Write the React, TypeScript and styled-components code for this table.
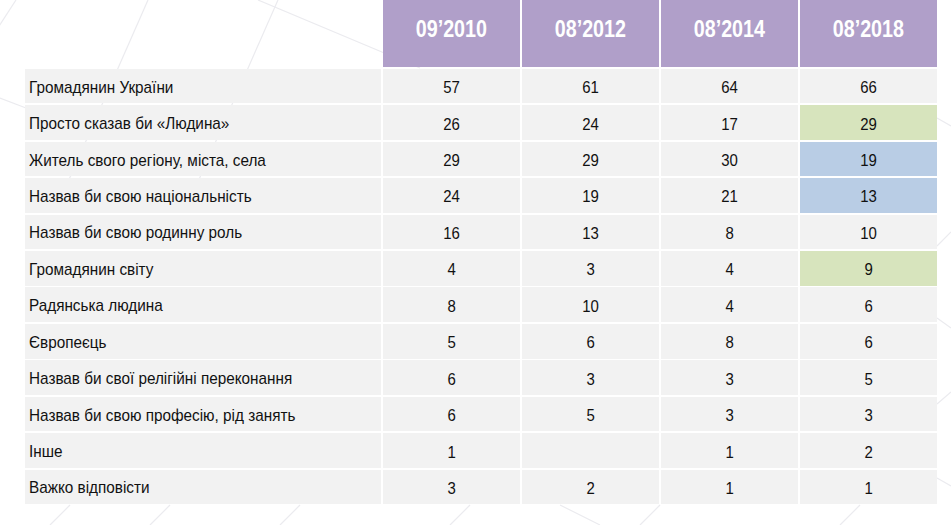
import React from "react";
import styled, { createGlobalStyle } from "styled-components";

const GlobalStyle = createGlobalStyle`
  html, body {
    margin: 0;
    padding: 0;
    background: #ffffff;
  }
  body {
    font-family: "Liberation Sans", Arial, sans-serif;
  }
`;

const Page = styled.div`
  position: relative;
  width: 951px;
  height: 525px;
  overflow: hidden;
  background: #ffffff;
`;

const Backdrop = styled.svg`
  position: absolute;
  left: 0;
  top: 0;
  width: 951px;
  height: 525px;
  z-index: 0;
`;

const Table = styled.div`
  position: relative;
  z-index: 1;
  display: grid;
  grid-template-columns: 356px repeat(4, 137px);
  grid-template-rows: 67px;
  grid-auto-rows: 34.6px;
  column-gap: 2px;
  row-gap: 1.85px;
  padding-left: 25px;
`;

const Corner = styled.div``;

const HeadCell = styled.div`
  display: flex;
  align-items: center;
  justify-content: center;
  padding-bottom: 10px;
  background: #b09fc9;
  color: #ffffff;
  font-family: "Liberation Sans", Arial, sans-serif;
  font-weight: 700;
  font-size: 24px;
`;

// the slide uses a narrow face, so squeeze the text horizontally
const Narrow = styled.span<{ $scale: number; $origin?: string }>`
  display: inline-block;
  white-space: nowrap;
  transform: scaleX(${(p) => p.$scale});
  transform-origin: ${(p) => p.$origin ?? "center"} center;
`;

const Label = styled.div`
  display: flex;
  align-items: center;
  padding-left: 4px;
  padding-top: 3px;
  background: #f2f2f2;
  color: #111111;
  font-family: "Liberation Sans", Arial, sans-serif;
  font-size: 17px;
`;

type Tone = "plain" | "green" | "blue";

const tones: Record<Tone, string> = {
  plain: "#f2f2f2",
  green: "#d7e4bd",
  blue: "#b9cde5",
};

const Value = styled.div<{ $tone: Tone }>`
  display: flex;
  align-items: center;
  justify-content: center;
  padding-top: 4px;
  background: ${(p) => tones[p.$tone]};
  color: #111111;
  font-family: "Liberation Sans", Arial, sans-serif;
  font-size: 17px;
`;

const years = ["09\u20192010", "08\u20192012", "08\u20192014", "08\u20192018"];

type Row = { label: string; values: string[]; tone?: Tone };

const rows: Row[] = [
  { label: "Громадянин України", values: ["57", "61", "64", "66"] },
  { label: "Просто сказав би «Людина»", values: ["26", "24", "17", "29"], tone: "green" },
  { label: "Житель свого регіону, міста, села", values: ["29", "29", "30", "19"], tone: "blue" },
  { label: "Назвав би свою національність", values: ["24", "19", "21", "13"], tone: "blue" },
  { label: "Назвав би свою родинну роль", values: ["16", "13", "8", "10"] },
  { label: "Громадянин світу", values: ["4", "3", "4", "9"], tone: "green" },
  { label: "Радянська людина", values: ["8", "10", "4", "6"] },
  { label: "Європеєць", values: ["5", "6", "8", "6"] },
  { label: "Назвав би свої релігійні переконання", values: ["6", "3", "3", "5"] },
  { label: "Назвав би свою професію, рід занять", values: ["6", "5", "3", "3"] },
  { label: "Інше", values: ["1", "", "1", "2"] },
  { label: "Важко відповісти", values: ["3", "2", "1", "1"] },
];

const lines: [number, number, number, number][] = [
  [16, 0, -10, 40],
  [148, 0, 60, 200],
  [278, 0, 190, 200],
  [258, 0, 420, 68],
  [0, 98, 26, 108],
  [70, 505, 50, 525],
  [170, 505, 150, 525],
  [300, 505, 280, 525],
  [470, 505, 450, 525],
  [560, 505, 600, 525],
  [660, 505, 640, 525],
  [860, 505, 840, 525],
  [937, 118, 951, 126],
  [937, 246, 951, 232],
  [937, 318, 951, 328],
  [937, 404, 951, 392],
  [937, 478, 951, 486],
];

export default function App() {
  return (
    <Page>
      <GlobalStyle />
      <Backdrop viewBox="0 0 951 525">
        {lines.map(([x1, y1, x2, y2], i) => (
          <line key={i} x1={x1} y1={y1} x2={x2} y2={y2} stroke="#ebebef" strokeWidth="1.2" />
        ))}
      </Backdrop>
      <Table>
        <Corner />
        {years.map((y) => (
          <HeadCell key={y}>
            <Narrow $scale={0.82}>{y}</Narrow>
          </HeadCell>
        ))}
        {rows.map((r) => (
          <React.Fragment key={r.label}>
            <Label>
              <Narrow $scale={0.9} $origin="left">
                {r.label}
              </Narrow>
            </Label>
            {r.values.map((v, i) => (
              <Value key={i} $tone={i === 3 && r.tone ? r.tone : "plain"}>
                <Narrow $scale={0.88}>{v}</Narrow>
              </Value>
            ))}
          </React.Fragment>
        ))}
      </Table>
    </Page>
  );
}
